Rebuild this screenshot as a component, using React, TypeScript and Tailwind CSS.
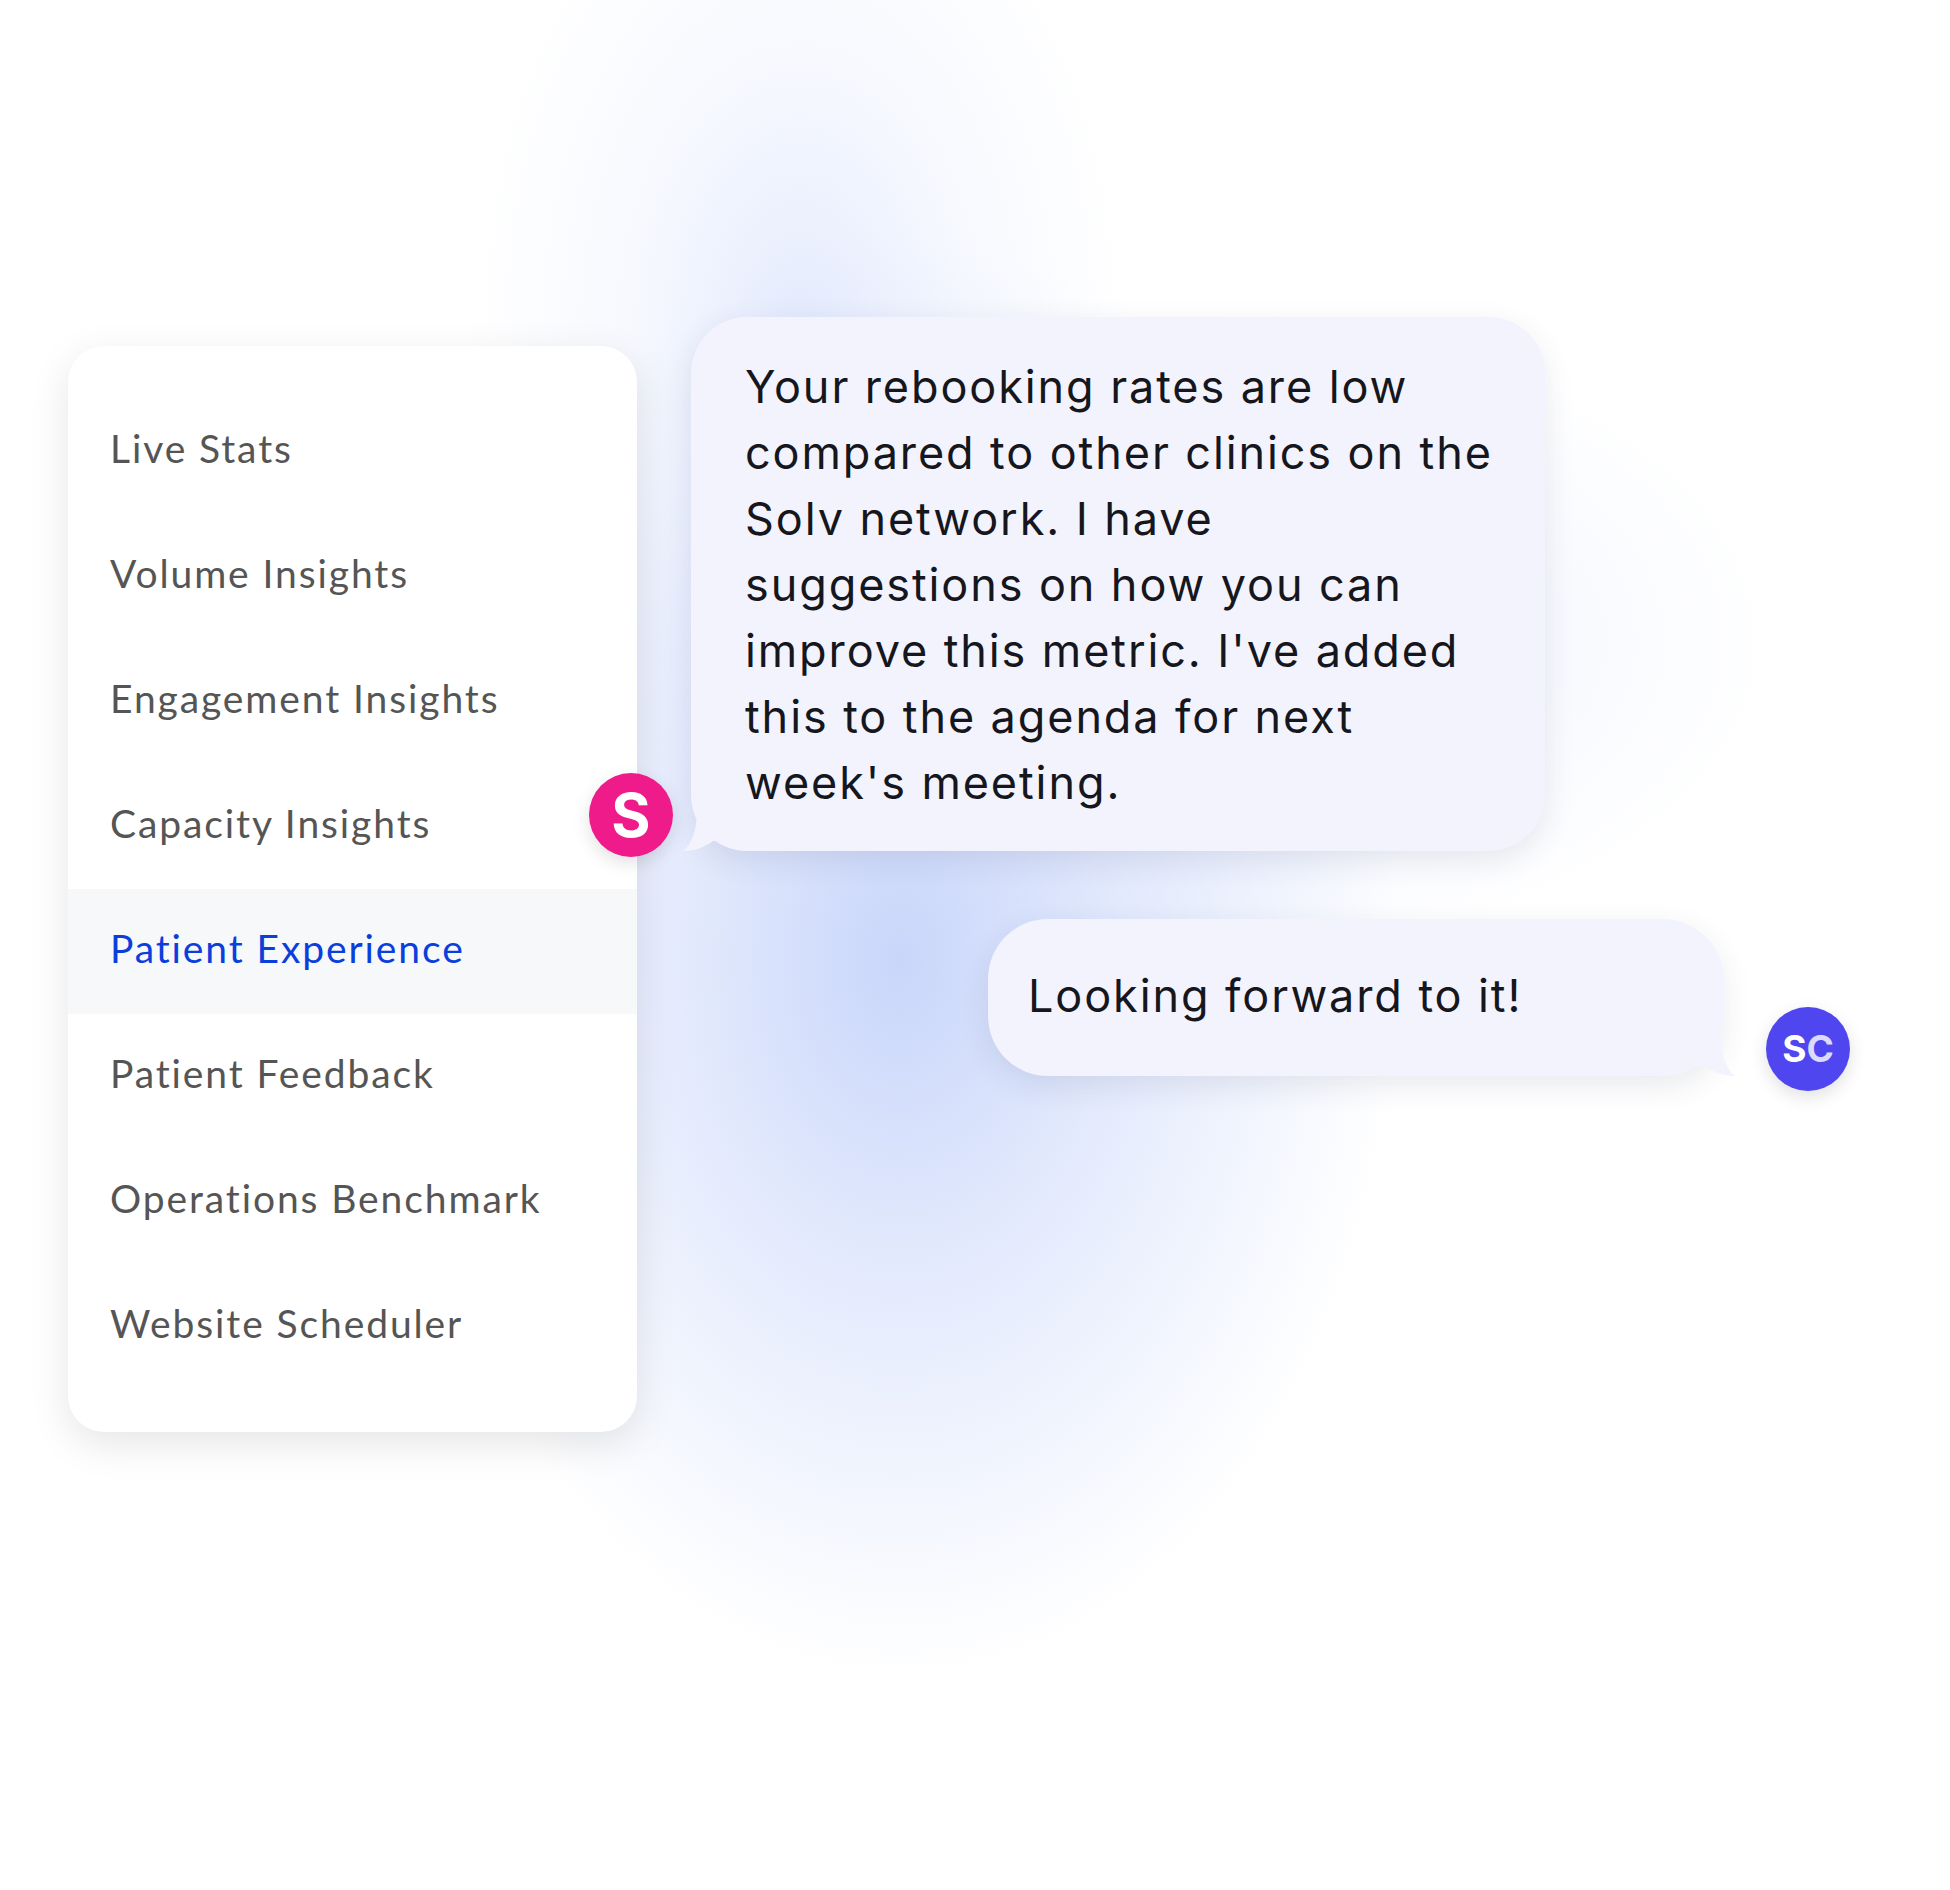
import React from "react";

const menu = [
  "Live Stats",
  "Volume Insights",
  "Engagement Insights",
  "Capacity Insights",
  "Patient Experience",
  "Patient Feedback",
  "Operations Benchmark",
  "Website Scheduler",
];

function Sidebar() {
  return (
    <div className="mt-[29px] w-[569px] shrink-0 rounded-[36px] bg-white py-[43px] shadow-[0_12px_40px_rgba(0,0,0,0.10)] font-['Lato',sans-serif]">
      {menu.map((item) => {
        const active = item === "Patient Experience";
        return (
          <div
            key={item}
            className={
              active
                ? "flex h-[125px] items-center bg-[#f7f8fa] pl-[42px] pb-[6px] text-[39px] tracking-[1.9px] text-[#0a3fdc]"
                : "flex h-[125px] items-center pl-[42px] pb-[6px] text-[39px] tracking-[1.9px] text-[#555555]"
            }
          >
            {item}
          </div>
        );
      })}
    </div>
  );
}

function Avatar({ children, className }: { children: React.ReactNode; className: string }) {
  return (
    <div
      className={
        "absolute flex h-[84px] w-[84px] items-center justify-center rounded-full font-bold text-white shadow-[0_6px_18px_rgba(0,0,0,0.12)] font-['Inter',sans-serif] " +
        className
      }
    >
      {children}
    </div>
  );
}

export default function App() {
  return (
    <div className="h-[1890px] w-[1950px] overflow-hidden bg-white bg-[radial-gradient(ellipse_500px_720px_at_900px_960px,rgba(198,212,250,0.95),rgba(206,218,251,0.55)_45%,rgba(220,228,252,0)),radial-gradient(ellipse_600px_330px_at_1180px_640px,rgba(214,224,252,0.8),rgba(226,233,253,0.35)_50%,rgba(230,236,253,0)),radial-gradient(ellipse_330px_520px_at_800px_330px,rgba(222,230,253,0.8),rgba(230,236,253,0.35)_50%,rgba(236,240,254,0))]">
      <div className="flex pl-[68px] pt-[317px]">
        <Sidebar />

        <div className="ml-[54px] flex flex-col font-['Inter',sans-serif] tracking-[1.9px] text-[#16161d]">
          <div className="relative w-[854px] rounded-[56px] bg-[#f3f3fd] pl-[54px] pr-[30px] pt-[37px] pb-[35px] text-[45px] leading-[66px] shadow-[0_10px_30px_rgba(40,50,90,0.10)]">
            <svg
              className="absolute bottom-0 left-[-8px]"
              width="60"
              height="40"
              viewBox="0 0 60 40"
            >
              <path d="M14 0 C14 20 8 34 0 40 C12 40 22 36 30 30 L60 30 L60 0 Z" fill="#f3f3fd" />
            </svg>
            <p className="relative whitespace-nowrap">
              Your rebooking rates are low
              <br />
              compared to other clinics on the
              <br />
              Solv network. I have
              <br />
              suggestions on how you can
              <br />
              improve this metric. I've added
              <br />
              this to the agenda for next
              <br />
              week's meeting.
            </p>
            <Avatar className="left-[-102px] bottom-[-6px] bg-[#ef1b8b] text-[60px] tracking-normal">S</Avatar>
          </div>

          <div className="relative ml-[297px] mt-[68px] flex h-[157px] w-[735px] items-center rounded-[60px] bg-[#f3f3fd] pl-[40px] pb-[4px] text-[45px] leading-[66px] shadow-[0_10px_30px_rgba(40,50,90,0.10)]">
            <svg
              className="absolute bottom-0 right-[-12px]"
              width="60"
              height="40"
              viewBox="0 0 60 40"
            >
              <path d="M46 0 C46 20 52 34 60 40 C48 40 38 36 30 30 L0 30 L0 0 Z" fill="#f3f3fd" />
            </svg>
            <span className="relative">Looking forward to it!</span>
            <Avatar className="right-[-127px] bottom-[-15px] bg-[#4f46f0] text-[37px] tracking-normal">
              S<span className="text-[#dcdafc]">C</span>
            </Avatar>
          </div>
        </div>
      </div>
    </div>
  );
}
